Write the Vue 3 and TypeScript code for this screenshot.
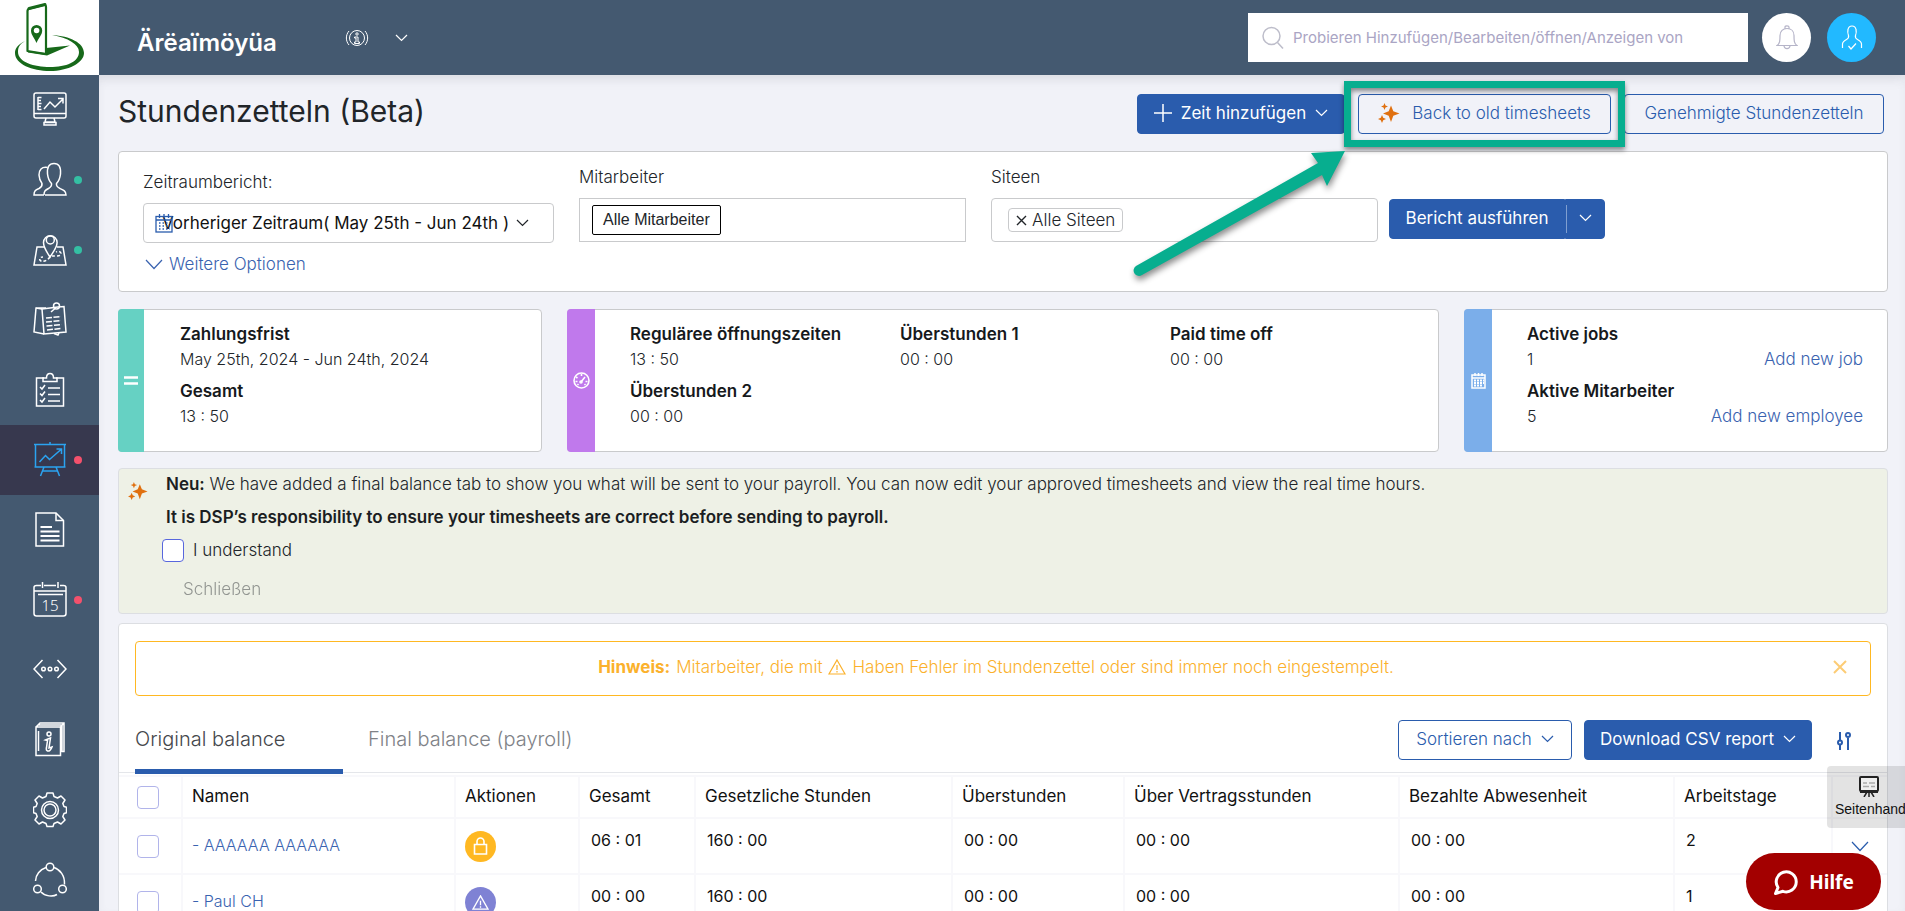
<script setup lang="ts">
import { ref } from 'vue'

interface NavItem {
  label: string
  art: string
  dot?: 'green' | 'red'
  active?: boolean
}

const nav: NavItem[] = [
  { label: 'Dashboard', art: '<rect x="1" y="1" width="32" height="25" rx="2"/><path d="M1 21.500h32M13 26l-1 4h10l-1-4M11 33v-2.500h12V33z"/><path d="M5 5v13M5 5.500h3.500M5 8.500h3M5 11.500h3.500M5 14.500h3M5 17.500h3.500"/><path d="M11 17l6-7 5 5 8-8M25 6.500h5v5"/>' },
  { label: 'Mitarbeiter', dot: 'green', art: '<path d="M12 33H33c0-4-2.500-5-6-6.500-3-1.500-4-2.500-3.500-5C26 19 27 16 27.500 12 28 5 26 1.500 21 1.500S14 5 14.500 12c.5 4 1.500 7 4 9.500.5 2.500-.5 3.500-3 5C12.500 28 11 29 11 33"/><path d="M14.500 5.500C8.500 4.500 6 8 6 13c.2 3.500 1 6 3 8.500.4 2.500-.5 3.500-3 5C2.500 28 1 29 1 33h10"/>' },
  { label: 'Standorte', dot: 'green', art: '<path d="M11 15H4L1 33h32l-3-18h-6"/><path d="M17 25c-3-5-6.500-9-6.500-14.500a6.800 6.800 0 0 1 13.600 0C24 16 20 20 17 25z"/><circle cx="17.300" cy="8" r="4"/><path stroke-dasharray="3 2" d="M17 25c-3 4-7 5-9 4s-2-4 2-4M19 24c3-.5 9 1 9-2.500 0-2-3-2.500-5-1.500"/>' },
  { label: 'Notizen', art: '<path d="M9 7l16-2 6-.5L33 30l-22 2z"/><path d="M9 7l-6-1L1 30l10 2M3 6h10M21 31.500l4 1.500 1-2"/><circle cx="23.500" cy="4" r="3"/><path d="M22 6.500L18 10"/><path stroke-dasharray="6 1.500" d="M13 16l15-1.500M13 20l15-1.500M13.500 24l15-1.500M14 28l14-1.500"/>' },
  { label: 'Aufgaben', art: '<path d="M11 6H3.500v28h27V6H23"/><path d="M10 9.500V6h3.500c0-3 1-4.500 3.500-4.500S20.500 3 20.500 6H24v3.500z"/><path d="M7 15l2 2 3-4M7 21.500l2 2 3-4M7 28l2 2 3-4M15 16h12M15 22.500h12M15 29h12"/>' },
  { label: 'Stundenzetteln', dot: 'red', active: true, art: '<path d="M1 2.500h32M2.500 2.500V25h29V2.500M17 0v2.500M1.500 25h31M11 25L7.500 34M23 25l3.500 9M9.500 29h15"/><path d="M6.500 20l6-6.500 4 4L28 7.500M23.500 7h5v5"/>' },
  { label: 'Dokumente', art: '<path d="M3 1h20l7.500 7.500V34H3z"/><path d="M23 1v7.500h7.500"/><path stroke-width="2" d="M7.500 15H19M7.500 19.500h19M7.500 24h19M7.500 28.500h19"/>' },
  { label: 'Kalender', dot: 'red', art: '<path d="M1 9V5.500C1 4 2 3.500 3.500 3.500H8M11 3.500h12M27 3.500h3.500C32 3.500 33 4 33 5.500V9M1 9v22.500C1 33 2 34 3.500 34h27c1.500 0 2.500-1 2.500-2.500V9M5 12.500h25M9.500 0v6M25 0v6M1 9h32"/><text x="17" y="29" text-anchor="middle" font-size="15" fill="currentColor" stroke="none" font-family="Noto Sans, sans-serif">15</text>' },
  { label: 'Integrationen', art: '<path d="M9.500 8L1 17l8.500 9M24.500 8L33 17l-8.500 9"/><circle cx="10.500" cy="17" r="1.800"/><circle cx="17" cy="17" r="1.800"/><circle cx="23.500" cy="17" r="1.800"/>' },
  { label: 'Handbuch', art: '<path d="M3 5l4-4h24v28.500h-2.500M3 5v28.500h24.500V5zM27.500 5L31 1M5 3h24v27M5.500 9v20"/><circle cx="16" cy="12" r="2"/><path d="M12.500 18l5-2-1.500 10 3-1c-1 3-3 4.500-4.500 4-1.500-.5-1.500-1.500-1-3.500l1-7z"/>' },
  { label: 'Einstellungen', art: '<path d="M14 1h6l1 3.500 3.500 1.500L28 4l4 4-2.200 3.500 1.200 3 2.500.8v5.400l-2.500.8-1.200 3L32 28l-4 4-3.500-2-3.500 1.500-1 3h-6l-1-3L9.500 30 6 32l-4-4 2.200-3.500-1.200-3-2.500-.8v-5.400l2.500-.8 1.200-3L2 8l4-4 3.500 2L13 4.500z" stroke-linejoin="round"/><circle cx="17" cy="18" r="8.500"/><circle cx="17" cy="18" r="6"/>' },
  { label: 'Netzwerk', art: '<circle cx="17" cy="5" r="3.800"/><circle cx="4.500" cy="27" r="3.800"/><circle cx="29.500" cy="27" r="3.800"/><path d="M13 5.500C7 7.500 2.500 13 2.500 19M21 5.500c6 2 11 8 10.500 17M8 30c4 4.500 12 5 16 2.500"/>' },
]

interface Stat { title: string; value: string }
const period: Stat[] = [
  { title: 'Zahlungsfrist', value: 'May 25th, 2024 - Jun 24th, 2024' },
  { title: 'Gesamt', value: '13 : 50' },
]
const hours: Stat[] = [
  { title: 'Reguläree öffnungszeiten', value: '13 : 50' },
  { title: 'Überstunden 1', value: '00 : 00' },
  { title: 'Paid time off', value: '00 : 00' },
  { title: 'Überstunden 2', value: '00 : 00' },
]
const counts = [
  { title: 'Active jobs', value: '1', link: 'Add new job' },
  { title: 'Aktive Mitarbeiter', value: '5', link: 'Add new employee' },
]

const columns = ['Gesamt', 'Gesetzliche Stunden', 'Überstunden', 'Über Vertragsstunden', 'Bezahlte Abwesenheit', 'Arbeitstage']
const rows = [
  { name: 'AAAAAA AAAAAA', status: 'lock', cells: ['06 : 01', '160 : 00', '00 : 00', '00 : 00', '00 : 00', '2'] },
  { name: 'Paul CH', status: 'warn', cells: ['00 : 00', '160 : 00', '00 : 00', '00 : 00', '00 : 00', '1'] },
]

const understood = ref(false)
const tab = ref<'original' | 'final'>('original')
</script>

<template>
  <div class="app">
    <header class="topbar">
      <a class="logo" href="#" aria-label="Startseite">
        <svg width="99" height="75" viewBox="0 0 99 75" fill="none">
          <path d="M25 41C17 45 15 49 15 53c0 11 17 18 35 18s34-8 34-18-14-17-32-18c16 3 27 9 27 17 0 10-13 15-29 15s-32-5-32-15c0-5 2-8 7-11z" fill="#17691a" />
          <path d="M27.500 11q0-2 2.500-2.500L43.500 5q2.500-.5 2.500 2v47l-18.500-3z" fill="#fff" stroke="#17691a" stroke-width="2.200" stroke-linejoin="round" />
          <path d="M29 8.500L45 4.500" stroke="#17691a" stroke-width="3" stroke-linecap="round" />
          <path d="M46 48l24-2.500L47 55.500 28 52.500v-1.500l17 2z" fill="#17691a" />
          <path d="M36.500 43c-2-5-5.500-8-5.500-12.500a5.600 5.600 0 0 1 11.200 0c0 4.500-3.700 7.500-5.700 12.500z" fill="#17691a" />
          <circle cx="36.600" cy="30.500" r="2.800" fill="#fff" />
        </svg>
      </a>
      <strong class="company">Ärëaïmöyüa</strong>
      <button class="plain info" type="button" aria-label="Information">
        <svg width="24" height="18" viewBox="0 0 24 18" fill="none" stroke="currentColor">
          <circle cx="12" cy="9" r="7.500" />
          <path d="M4 2C.5 6 .5 12 4 16M20 2c3.500 4 3.500 10 0 14" />
          <circle cx="12" cy="5" r="1.200" />
          <path d="M9.500 8h3.500v5h1.500v1.500h-5V13H11V9H9.500z" />
        </svg>
      </button>
      <button class="plain more" type="button" aria-label="Mehr">
        <svg class="chev" width="13" height="8" viewBox="0 0 13 8"><path d="M1 1l5.500 5.500L12 1" /></svg>
      </button>
      <label class="search">
        <svg width="24" height="24" viewBox="0 0 24 24" fill="none" stroke="#bdbdca" stroke-width="1.500"><circle cx="10.500" cy="10" r="8.500" /><path d="M16.500 16.500L22 22.500" /></svg>
        <input type="text" aria-label="Suche" placeholder="Probieren Hinzufügen/Bearbeiten/öffnen/Anzeigen von">
      </label>
      <button class="round bell" type="button" aria-label="Benachrichtigungen">
        <svg width="22" height="25" viewBox="0 0 22 25" fill="none" stroke="currentColor" stroke-width="1.200"><path d="M1 20.500c3-2 3-5 3-10 0-4.500 3-7 7-7s7 2.500 7 7c0 5 0 8 3 10zM9 3.500V2c0-1.500 4-1.500 4 0v1.500M8 21c.5 3.500 5.500 3.500 6 0" /></svg>
      </button>
      <button class="round user" type="button" aria-label="Profil">
        <svg width="22" height="26" viewBox="0 0 22 26" fill="none" stroke="currentColor" stroke-width="1.200"><path d="M1.500 23v-4c0-2 1.500-3 4-4.500 2-1 2.500-2 2-4C6.500 8 6.500 6.500 7 4.500 7.500 2 9 1 11 1s3.500 1 4 3.500c.5 2 .5 3.500-.5 6-.5 2 0 3 2 4 2.500 1.500 4 2.500 4 4.500v4M7.500 21l2.500 3 5-5.500" /></svg>
      </button>
    </header>

    <nav class="side">
      <a v-for="item in nav" :key="item.label" href="#" :class="{ active: item.active }" :aria-label="item.label">
        <svg width="34" height="36" viewBox="0 0 34 36" fill="none" stroke="currentColor" stroke-width="1.500" v-html="item.art" />
        <span v-if="item.dot" class="dot" :class="item.dot" />
      </a>
    </nav>

    <main>
      <div class="head">
        <h1>Stundenzetteln (Beta)</h1>
        <button class="btn solid add" type="button">
          <svg width="18" height="18" viewBox="0 0 18 18"><path d="M9 0v18M0 9h18" stroke="currentColor" stroke-width="1.500" /></svg>
          Zeit hinzufügen
          <svg class="chev" width="13" height="8" viewBox="0 0 13 8"><path d="M1 1l5.500 5.500L12 1" /></svg>
        </button>
        <div class="marked">
          <button class="btn line old" type="button">
            <svg width="22" height="20" viewBox="0 0 22 20" fill="#e0700f"><path d="M13 2.500l2.300 5.700L21.500 10.500l-6.200 2.300L13 19l-2.300-6.200L5 10.500l5.700-2.300zM6.500 0l1 2.500L10 3.500l-2.500 1-1 2.500-1-2.500L3 3.500l2.500-1zM4 12l1.200 2.800L8 16l-2.800 1.200L4 20l-1.200-2.800L0 16l2.800-1.200z" /></svg>
            Back to old timesheets
          </button>
          <span class="ring" />
          <svg class="arrow" width="230" height="136" viewBox="0 0 230 136"><path d="M9 117L191 14 184 4 218 2 200 37 195 26 15 126a5 5 0 0 1-6-9z" fill="#07ae8f" /></svg>
        </div>
        <button class="btn line approved" type="button">Genehmigte Stundenzetteln</button>
      </div>

      <section class="filters">
        <div class="field first">
          <label for="period">Zeitraumbericht:</label>
          <div class="pick">
            <svg class="cal" width="18" height="19" viewBox="0 0 18 19" fill="none" stroke="#2a5cad" stroke-width="1.300"><rect x="1" y="2.500" width="16" height="15.500" /><path d="M1 6h16M4.500 0v4M9 0v4M13.500 0v4" /><path stroke-dasharray="1.500 2" stroke-width="1.600" d="M4 9h11M4 12h11M4 15h11" /></svg>
            <select id="period"><option>Vorheriger Zeitraum( May 25th - Jun 24th )</option></select>
            <svg class="chev caret" width="13" height="8" viewBox="0 0 13 8"><path d="M1 1l5.500 5.500L12 1" /></svg>
          </div>
          <a class="options" href="#">
            <svg class="chev" width="18" height="11" viewBox="0 0 18 11"><path d="M1 1l8 8.500L17 1" /></svg>
            Weitere Optionen
          </a>
        </div>
        <div class="field">
          <label for="employees">Mitarbeiter</label>
          <div class="box square">
            <span class="tag hard">Alle Mitarbeiter</span>
            <input id="employees" type="text">
          </div>
        </div>
        <div class="field">
          <label for="sites">Siteen</label>
          <div class="box">
            <span class="tag soft"><button class="plain" type="button" aria-label="Entfernen"><svg width="11" height="11" viewBox="0 0 11 11"><path d="M1 1l9 9M10 1l-9 9" stroke="currentColor" stroke-width="1.400" /></svg></button>Alle Siteen</span>
            <input id="sites" type="text">
          </div>
        </div>
        <div class="run">
          <button class="btn solid" type="button">Bericht ausführen</button>
          <button class="btn solid drop" type="button" aria-label="Weitere Berichte"><svg class="chev" width="13" height="8" viewBox="0 0 13 8"><path d="M1 1l5.500 5.500L12 1" /></svg></button>
        </div>
      </section>

      <section class="cards">
        <article class="card teal">
          <div class="stripe"><svg width="14" height="9" viewBox="0 0 14 9"><path d="M0 1.500h14M0 7.500h14" stroke="#fff" stroke-width="2.600" /></svg></div>
          <div class="stats single">
            <div v-for="s in period" :key="s.title"><h2>{{ s.title }}</h2><p>{{ s.value }}</p></div>
          </div>
        </article>
        <article class="card violet">
          <div class="stripe"><svg width="17" height="17" viewBox="0 0 17 17" fill="none" stroke="#fff" stroke-width="1.600"><circle cx="8.500" cy="8.500" r="7.500" /><path d="M8 10l4-5M8.500 2v2M3 5l1.500 1M2.500 9.500h2M14.500 9.500h-2M4.500 13l1-1M12.500 13l-1-1" /><circle cx="8" cy="10" r="1" /></svg></div>
          <div class="stats triple">
            <div v-for="s in hours" :key="s.title"><h2>{{ s.title }}</h2><p>{{ s.value }}</p></div>
          </div>
        </article>
        <article class="card blue">
          <div class="stripe"><svg width="15" height="16" viewBox="0 0 15 16" fill="none" stroke="#fff" stroke-width="1.500"><path d="M1 2h13v13H1zM1 5h13M4 0v3M7.500 0v3M11 0v3" /><path stroke-dasharray="2 1" stroke-width="2" d="M3 7.500h10M3 10h10M3 12.500h8" /></svg></div>
          <div class="stats single">
            <div v-for="s in counts" :key="s.title"><h2>{{ s.title }}</h2><p>{{ s.value }}<a href="#">{{ s.link }}</a></p></div>
          </div>
        </article>
      </section>

      <section class="news">
        <svg class="spark" width="20" height="20" viewBox="0 0 22 20" fill="#e0700f"><path d="M13 2.500l2.300 5.700L21.500 10.500l-6.200 2.300L13 19l-2.300-6.200L5 10.500l5.700-2.300zM6.500 0l1 2.500L10 3.500l-2.500 1-1 2.500-1-2.500L3 3.500l2.500-1zM4 12l1.200 2.800L8 16l-2.800 1.200L4 20l-1.200-2.800L0 16l2.800-1.200z" /></svg>
        <div class="copy">
          <p><b>Neu:</b> We have added a final balance tab to show you what will be sent to your payroll. You can now edit your approved timesheets and view the real time hours.</p>
          <p><b>It is DSP’s responsibility to ensure your timesheets are correct before sending to payroll.</b></p>
          <label class="agree"><input v-model="understood" class="check" type="checkbox">I understand</label>
          <button class="plain close" type="button" :disabled="!understood">Schließen</button>
        </div>
      </section>

      <section class="sheet">
        <div class="alert">
          <p><b>Hinweis:</b> Mitarbeiter, die mit
            <svg width="18" height="16" viewBox="0 0 18 16" fill="none" stroke="currentColor" stroke-width="1.200"><path d="M9 1l8 14H1zM9 6v5M9 12v1.500" /></svg>
            Haben Fehler im Stundenzettel oder sind immer noch eingestempelt.</p>
          <button class="plain" type="button" aria-label="Hinweis schließen"><svg width="14" height="14" viewBox="0 0 14 14"><path d="M1 1l12 12M13 1L1 13" stroke="currentColor" stroke-width="2" /></svg></button>
        </div>
        <div class="tabs">
          <button type="button" :class="{ on: tab === 'original' }" @click="tab = 'original'">Original balance</button>
          <button type="button" :class="{ on: tab === 'final' }" @click="tab = 'final'">Final balance (payroll)</button>
          <div class="tools">
            <button class="btn line sort" type="button">Sortieren nach <svg class="chev" width="13" height="8" viewBox="0 0 13 8"><path d="M1 1l5.500 5.500L12 1" /></svg></button>
            <button class="btn solid csv" type="button">Download CSV report <svg class="chev" width="13" height="8" viewBox="0 0 13 8"><path d="M1 1l5.500 5.500L12 1" /></svg></button>
            <button class="plain tune" type="button" aria-label="Spalten"><svg width="16" height="20" viewBox="0 0 16 20" fill="none" stroke="currentColor" stroke-width="2"><path d="M4 1v8M4 14v5M12 7v12" /><circle cx="4" cy="11.500" r="2" /><circle cx="12" cy="4" r="2" /></svg></button>
          </div>
        </div>
        <table>
          <colgroup><col class="c-check"><col><col class="c-act"><col class="c-sum"><col class="c-legal"><col class="c-over"><col class="c-wide"><col class="c-wide"><col class="c-days"><col class="c-open"></colgroup>
          <thead>
            <tr>
              <th><input class="check" type="checkbox" aria-label="Alle auswählen"></th>
              <th>Namen</th><th>Aktionen</th>
              <th v-for="c in columns" :key="c">{{ c }}</th>
              <th />
            </tr>
          </thead>
          <tbody>
            <tr v-for="r in rows" :key="r.name">
              <td><input class="check" type="checkbox" :aria-label="r.name"></td>
              <td class="name"><a href="#">- {{ r.name }}</a></td>
              <td>
                <button class="state" :class="r.status" type="button" :aria-label="r.status === 'lock' ? 'Gesperrt' : 'Warnung'">
                  <svg v-if="r.status === 'lock'" width="15" height="18" viewBox="0 0 15 18" fill="none" stroke="currentColor" stroke-width="1.600"><path d="M1.500 7.500h12v9.500h-12zM4 7.500V4.500a3.500 3.500 0 0 1 7 0v3" /></svg>
                  <svg v-else width="17" height="15" viewBox="0 0 18 16" fill="none" stroke="currentColor" stroke-width="1.400"><path d="M9 1l8 14H1zM9 6v5M9 12v1.500" /></svg>
                </button>
              </td>
              <td v-for="(c, i) in r.cells" :key="i" class="num">{{ c }}</td>
              <td class="open"><button class="plain" type="button" aria-label="Details"><svg class="chev" width="18" height="11" viewBox="0 0 18 11"><path d="M1 1l8 8.500L17 1" /></svg></button></td>
            </tr>
          </tbody>
        </table>
      </section>
    </main>

    <a class="manual" href="#">
      <svg width="20" height="21" viewBox="0 0 20 21"><rect x="1" y="1" width="18" height="14" rx="1" fill="#eee" stroke="#222" stroke-width="2" /><path d="M1 14h18v3H1z" fill="#222" /><path d="M8 16l-3 5M12 16l3 5M10 16v5" stroke="#222" stroke-width="1.500" /><path d="M4 7h4M10 7h6M4 10.500h6M12 10.500h4" stroke="#aaa" stroke-width="1.500" /></svg>
      <span>Seitenhand</span>
    </a>
    <button class="help" type="button">
      <svg width="25" height="26" viewBox="0 0 25 26" fill="none" stroke="#fff" stroke-width="3"><path d="M5 18.500A10 10 0 1 1 10 22.300L2.500 24.500z" stroke-linejoin="round" /></svg>
      Hilfe
    </button>
  </div>
</template>

<style>
body { margin: 0; }
</style>

<style scoped>
* { box-sizing: border-box; }
.app {
  position: relative;
  display: grid;
  grid-template-columns: 99px minmax(0, 1fr);
  grid-template-rows: 75px minmax(0, 1fr);
  height: 100vh;
  overflow: hidden;
  background: #f1f2f8;
  color: #212529;
  font: 300 17px/24px Inter, "Open Sans", sans-serif;
}
button, input, select { font: inherit; color: inherit; }
button { cursor: pointer; }
h1, h2, p { margin: 0; }
a { color: #3a63b0; text-decoration: none; }
b { font-weight: 600; color: #1b1e22; }
svg { display: block; flex: none; }
.chev { fill: none; stroke: currentColor; stroke-width: 1.2; }
.plain { padding: 0; border: 0; background: none; }

.topbar {
  grid-column: 1 / -1;
  display: flex;
  align-items: center;
  padding-right: 29px;
  background: #445970;
  color: #fff;
  box-shadow: 0 1px 15px rgba(69, 65, 78, .1);
}
.logo { width: 99px; height: 75px; background: #fff; }
.company { width: 208px; margin-left: 38px; padding-top: 10px; font-size: 24px; line-height: 32px; font-weight: 600; }
.more { margin-left: 26px; }
.search { display: flex; align-items: center; gap: 8px; width: 500px; height: 49px; margin-left: auto; padding: 0 13px; background: #fff; }
.search input { flex: 1; min-width: 0; padding: 0; border: 0; outline: 0; background: none; font-size: 15px; font-weight: 400; }
.search input::placeholder { color: #aaa5c4; opacity: 1; }
.round { display: grid; place-items: center; width: 49px; height: 49px; margin-left: 16px; padding: 0; border: 0; border-radius: 50%; }
.bell { margin-left: 14px; background: #fff; color: #b5b4c8; }
.user { background: #22b9ff; color: #fff; }

.side { background: #445970; }
.side a { position: relative; display: grid; place-items: center; height: 70px; color: #fff; }
.side a.active { background: #37384e; color: #2ba3f0; }
.dot { position: absolute; top: 31px; right: 17px; width: 8px; height: 8px; border-radius: 50%; }
.green { background: #34bfa3; }
.red { background: #f4516c; }

main { padding: 19px 17px 0 19px; box-shadow: inset 0 4px 8px rgba(69, 65, 78, .06); }
.head { display: flex; align-items: flex-start; gap: 13px; height: 57px; padding-right: 4px; }
h1 { margin-right: auto; font-size: 30px; line-height: 34px; font-weight: 400; }
.btn { display: flex; align-items: center; justify-content: center; gap: 9px; height: 40px; padding: 0 10px 2px; border: 1px solid #2a5cad; border-radius: 4px; white-space: nowrap; }
.solid { background: #2a5cad; color: #fff; font-weight: 400; }
.line { background: none; color: #2a5cad; font-weight: 300; }
.add { width: 208px; }
.old { width: 253px; gap: 12px; }
.approved { width: 260px; }
.marked { position: relative; }
.ring { position: absolute; z-index: 2; inset: -13px -14px; border: 7px solid #07ae8f; box-shadow: 0 3px 5px rgba(0, 0, 0, .45), inset 0 3px 5px rgba(0, 0, 0, .45); pointer-events: none; }
.arrow { position: absolute; z-index: 2; top: 55px; left: -231px; filter: drop-shadow(1px 4px 3px rgba(0, 0, 0, .45)); pointer-events: none; }

.filters { display: flex; align-items: flex-start; gap: 25px; height: 141px; padding: 13px 24px 0; border: 1px solid #c9cacc; border-radius: 4px; background: #fff; }
.field { width: 387px; }
.field > label { display: block; margin-bottom: 9px; }
.first { width: 411px; padding-top: 5px; }
.pick { position: relative; display: flex; align-items: center; height: 40px; border: 1px solid #c9cacc; border-radius: 4px; }
.pick select { width: 100%; height: 38px; padding: 0 0 0 18px; border: 0; background: none; appearance: none; color: #111; font-weight: 400; }
.cal { position: absolute; left: 11px; }
.caret { position: absolute; right: 24px; }
.options { display: flex; align-items: center; gap: 6px; padding: 9px 2px 0; }
.box { display: flex; align-items: center; height: 44px; padding: 0 12px; border: 1px solid #c9cacc; border-radius: 4px; }
.square { border-radius: 0; }
.box input { flex: 1; min-width: 0; border: 0; outline: 0; background: none; }
.tag { display: flex; align-items: center; gap: 5px; white-space: nowrap; }
.hard { height: 30px; padding: 0 10px; border: 1px solid #000; border-radius: 2px; font-family: "Liberation Sans", sans-serif; font-size: 16px; font-weight: 400; }
.soft { height: 24px; margin-left: 4px; padding: 0 7px; border: 1px solid #c9cacc; border-radius: 4px; }
.run { display: flex; margin: 34px 0 0 -14px; }
.run .btn:first-child { width: 176px; border-radius: 4px 0 0 4px; }
.run .drop { position: relative; width: 40px; border-radius: 0 4px 4px 0; }
.drop::before { content: ""; position: absolute; left: 0; top: 5px; bottom: 5px; width: 1px; background: #7f9fd0; }

.cards { display: grid; grid-template-columns: minmax(0, 424fr) minmax(0, 872fr) minmax(0, 424fr); gap: 25px; margin-top: 17px; }
.card { display: flex; height: 143px; border: 1px solid #c9cacc; border-radius: 4px; background: #fff; }
.stripe { flex: none; display: grid; place-items: center; width: 28px; margin: -1px 0 -1px -1px; border-radius: 4px 0 0 4px; }
.teal .stripe { width: 26px; background: #66d1c3; }
.violet .stripe { background: #c079ec; }
.blue .stripe { background: #7baeea; }
.stats { flex: 1; display: grid; align-content: start; row-gap: 7px; padding: 12px 24px 0 35px; }
.teal .stats { padding-left: 36px; }
.triple { grid-template-columns: repeat(3, 270px); }
h2 { font-size: 17px; line-height: 25px; font-weight: 600; color: #16191c; }
.stats p { display: flex; justify-content: space-between; font-size: 16px; line-height: 25px; }
.stats a { font-size: 17px; }

.news { display: flex; height: 146px; margin-top: 16px; padding: 3px 9px 0; border: 1px solid #dcdee2; border-radius: 4px; background: #eef1e6; }
.spark { margin-top: 9px; }
.copy { margin-left: 18px; }
.copy p { margin-bottom: 9px; }
.agree { display: flex; align-items: center; gap: 9px; height: 24px; margin-left: -4px; }
.close { margin: 15px 0 0 17px; color: #212529; opacity: .45; }
.check { flex: none; width: 22px; height: 23px; margin: 0; border: 1px solid #b1b4ea; border-radius: 4px; background: #fff; appearance: none; }
.agree .check { border-color: #5867dd; }

.sheet { margin-top: 9px; border: 1px solid #dcdee2; border-radius: 4px; background: #fff; }
.alert { display: flex; align-items: center; height: 55px; margin: 17px 16px 0; padding: 0 23px; border: 1px solid #ffb822; border-radius: 4px; color: #fbb12c; font-weight: 300; }
.alert p { flex: 1; display: flex; align-items: center; justify-content: center; gap: 6px; margin-bottom: 4px; }
.alert b { color: inherit; font-weight: 700; }
.alert .plain { margin-bottom: 3px; opacity: .65; }
.tabs { display: flex; align-items: flex-start; height: 77px; padding: 0 16px; border-bottom: 1px solid #e4e6ea; }
.tabs > button { height: 78px; margin-right: 25px; padding: 12px 0 0; border: 0; border-bottom: 5px solid transparent; background: none; color: #808287; font-size: 20px; text-align: left; }
.tabs > .on { width: 208px; border-color: #2a5cad; color: #45474c; }
.tools { display: flex; gap: 12px; margin: 24px 0 0 auto; }
.sort { width: 174px; }
.csv { width: 228px; }
.tune { margin: 2px 19px 0 12px; color: #2a5cad; }

table { width: 100%; margin-top: 2px; border-collapse: collapse; table-layout: fixed; font-size: 16px; font-weight: 400; color: #111; }
th, td { padding: 0 9px; border: 2px solid #f8f8fb; text-align: left; font-weight: 400; white-space: nowrap; }
th { height: 42px; padding-bottom: 3px; font-size: 17px; }
td { height: 56px; }
th:first-child, td:first-child { padding: 0 0 0 18px; border-left: 0; }
th:last-child, td:last-child { border-right: 0; }
table .check { display: block; }
.name { padding-bottom: 3px; }
.name a { font-weight: 300; }
.num { padding: 0 11px 12px; }
.open { color: #2a5cad; }
.open button { padding-left: 9px; }
.state { display: grid; place-items: center; width: 31px; height: 31px; padding: 0; border: 0; border-radius: 50%; color: #fff; }
.lock { background: #ffb822; }
.warn { background: #7f82d4; }
.c-check { width: 63px; }
.c-act { width: 124px; }
.c-sum { width: 116px; }
.c-legal { width: 257px; }
.c-over { width: 172px; }
.c-wide { width: 275px; }
.c-days { width: 158px; }
.c-open { width: 55px; }

.manual { position: absolute; z-index: 3; right: 0; bottom: 83px; width: 78px; height: 62px; padding: 10px 0 0 8px; border-radius: 4px 0 0 4px; background: rgba(0, 0, 0, .11); color: #111; font: 400 14px/16px "Liberation Sans", sans-serif; white-space: nowrap; overflow: hidden; }
.manual svg { margin: 0 auto 4px 24px; }
.help { position: absolute; z-index: 4; right: 24px; bottom: 1px; display: flex; align-items: center; justify-content: center; gap: 11px; width: 135px; height: 57px; padding: 0; border: 0; border-radius: 29px; background: #a30000; color: #fff; font: 700 19px/24px "Noto Sans", sans-serif; }
</style>
